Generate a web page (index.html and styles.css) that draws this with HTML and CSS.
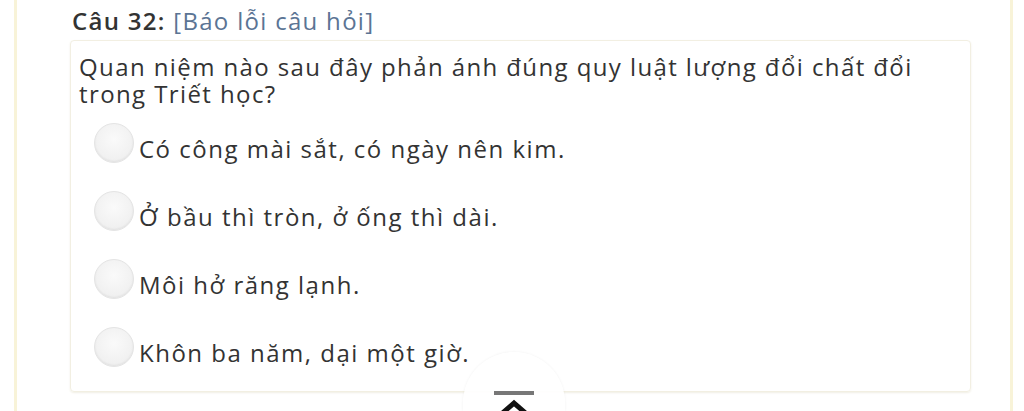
FILE: index.html
```html
<!DOCTYPE html>
<html lang="vi">
<head>
    <meta charset="UTF-8">
    <meta name="viewport" content="width=device-width, initial-scale=1.0">
    <title>Câu 32</title>
    <link rel="stylesheet" href="styles.css">
</head>
<body>

<div class="frame">
    <div class="question-title">
        <b>Câu 32:</b> <a href="#" class="report">[Báo lỗi câu hỏi]</a>
    </div>

    <div class="question-card">
        <p class="question-text">Quan niệm nào sau đây phản ánh đúng quy luật lượng đổi chất đổi trong Triết học?</p>

        <label class="option"><span class="radio"></span><span class="option-text">Có công mài sắt, có ngày nên kim.</span></label>
        <label class="option"><span class="radio"></span><span class="option-text">Ở bầu thì tròn, ở ống thì dài.</span></label>
        <label class="option"><span class="radio"></span><span class="option-text">Môi hở răng lạnh.</span></label>
        <label class="option"><span class="radio"></span><span class="option-text">Khôn ba năm, dại một giờ.</span></label>
    </div>
</div>

<div class="to-top">
    <span class="to-top-bar"></span>
    <svg class="to-top-arrow" width="44" height="24" viewBox="0 0 44 24">
        <path d="M6 22 L22 8 L38 22" fill="none" stroke="#111" stroke-width="5"/>
    </svg>
</div>

</body>
</html>
```

FILE: styles.css
```css
body {
    margin: 0;
    background: #fff;
    font-family: 'Open Sans', 'Noto Sans', sans-serif;
    color: #3a3a3a;
    height: 411px;
    overflow: hidden;
    position: relative;
}
.frame {
    margin-left: 14px;
    width: 999px;
    height: 411px;
    border-left: 3px solid #f8f3d8;
    border-right: 3px solid #f8f3d8;
    padding-left: 53px;
    box-sizing: border-box;
    overflow: hidden;
}
.question-title {
    padding-top: 5px;
    padding-left: 2px;
    font-size: 24px;
    line-height: 32px;
    height: 35px;
    letter-spacing: 1.3px;
}
.question-title b {
    font-weight: 600;
    color: #333;
}
.report {
    color: #5b7494;
    text-decoration: none;
}
.question-card {
    width: 901px;
    box-sizing: border-box;
    border: 1px solid #f2efe2;
    border-radius: 4px;
    box-shadow: 0 1px 2px rgba(220, 214, 190, 0.4);
    padding: 12px 8px 10px;
}
.question-text {
    margin: 0 0 2px;
    font-size: 24px;
    line-height: 27px;
    color: #333;
    letter-spacing: 1.4px;
}
.option {
    display: flex;
    align-items: center;
    height: 68px;
    padding-left: 15px;
    font-size: 24px;
    color: #333;
    letter-spacing: 1.5px;
}
.option-text {
    padding-top: 10px;
}
.radio {
    width: 38px;
    height: 38px;
    border-radius: 50%;
    border: 1px solid #e4e4e4;
    background: radial-gradient(circle at 50% 40%, #fafafa, #ececec);
    box-shadow: inset 0 -1px 2px rgba(0, 0, 0, 0.06);
    margin-right: 5px;
    flex-shrink: 0;
}
.to-top {
    position: absolute;
    left: 463px;
    top: 352px;
    width: 102px;
    height: 59px;
    border-radius: 51px 51px 0 0;
    background: rgba(255, 255, 255, 0.92);
    box-shadow: 0 0 3px rgba(0, 0, 0, 0.06);
    display: flex;
    flex-direction: column;
    align-items: center;
    overflow: hidden;
}
.to-top-bar {
    margin-top: 39px;
    width: 40px;
    height: 4px;
    flex-shrink: 0;
    background: #777;
}
.to-top-arrow {
    flex-shrink: 0;
}
```
